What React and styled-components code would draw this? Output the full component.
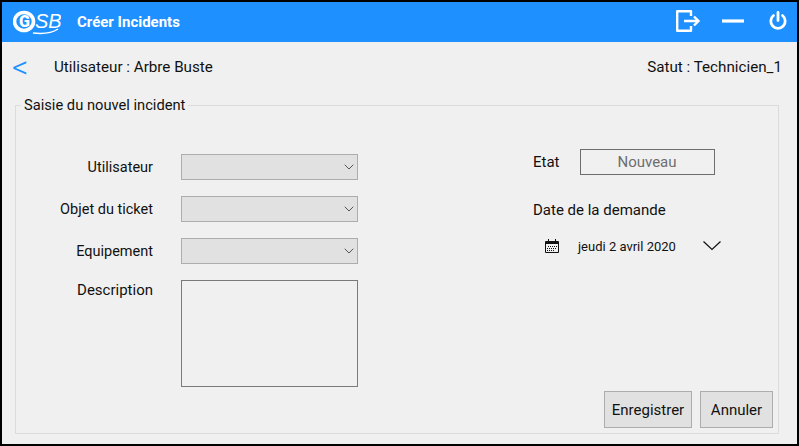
import React from 'react';
import styled, { createGlobalStyle } from 'styled-components';
import { ChevronDown } from 'lucide-react';

const GlobalStyle = createGlobalStyle`
	html, body {
		margin: 0;
		padding: 0;
		background: #000;
	}
	body {
		font-family: Roboto, "Liberation Sans", sans-serif;
	}
`;

const Window = styled.div`
	box-sizing: border-box;
	width: 799px;
	height: 446px;
	border: 2px solid #000;
	background: #f0f0f0;
	display: flex;
	flex-direction: column;
	color: #111;
	font-size: 15px;
`;

const TitleBar = styled.header`
	height: 40px;
	flex: none;
	background: #1e90ff;
	display: flex;
	align-items: center;
	padding: 0 10px 0 11px;
	color: #fff;
`;

const Title = styled.h1`
	margin: 0 0 0 16px;
	font-size: 15px;
	font-weight: 700;
	flex: 1;
`;

const TitleIcons = styled.div`
	display: flex;
	align-items: center;
	gap: 21px;
	padding-bottom: 3px;
`;

const InfoRow = styled.div`
	box-sizing: border-box;
	height: 55px;
	flex: none;
	display: flex;
	align-items: center;
	padding: 0 15px 5px 10px;
`;

const BackLink = styled.span`
	width: 42px;
	color: #1e90ff;
	font-size: 32px;
	font-weight: 300;
	line-height: 24px;
`;

const InfoText = styled.span`
	flex: ${(props) => (props.$grow ? 1 : 'none')};
	font-size: 15.2px;
`;

const Group = styled.fieldset`
	margin: 0 18px 0 13px;
	padding: 0;
	border: 1px solid #dcdcdc;
`;

const GroupTitle = styled.legend`
	margin-left: 5px;
	padding: 0 3px;
	font-size: 14.7px;
	line-height: 16px;
`;

const Columns = styled.div`
	display: flex;
	padding-top: 36px;
`;

const FieldGrid = styled.div`
	display: grid;
	grid-template-columns: 137px 177px;
	grid-auto-rows: min-content;
	column-gap: 28px;
	row-gap: 16px;
	padding-top: 5px;
`;

const FieldLabel = styled.label`
	height: 26px;
	text-align: right;
	font-size: ${(props) => props.$size || 14.5}px;
	line-height: ${(props) => props.$lineHeight || 28}px;
`;

const Select = styled.div`
	box-sizing: border-box;
	height: 26px;
	background: #e1e1e1;
	border: 1px solid #adadad;
	display: flex;
	align-items: center;
	justify-content: flex-end;
	color: #555;
`;

const Description = styled.div`
	box-sizing: border-box;
	height: 107px;
	background: #f0f0f0;
	border: 1px solid #7a7a7a;
`;

const SideColumn = styled.div`
	margin-left: 175px;
	display: flex;
	flex-direction: column;
`;

const StateRow = styled.div`
	display: flex;
	align-items: center;
	height: 26px;
	gap: 20px;
`;

const StateValue = styled.div`
	box-sizing: border-box;
	width: 135px;
	height: 26px;
	border: 1px solid #6d6d6d;
	color: #6d6d6d;
	text-align: center;
	line-height: 24px;
`;

const DateLabel = styled.div`
	margin-top: 22px;
	line-height: 26px;
`;

const DatePicker = styled.div`
	display: flex;
	align-items: center;
	height: 26px;
	margin-top: 10px;
	padding-left: 12px;
	font-size: 13px;
`;

const DateText = styled.span`
	margin-left: 19px;
	width: 125px;
`;

const Actions = styled.div`
	display: flex;
	justify-content: flex-end;
	gap: 8px;
	padding: 4px 5px 5px 0;
`;

const Button = styled.button`
	box-sizing: border-box;
	width: ${(props) => props.$width}px;
	height: 37px;
	padding: 0;
	background: #e1e1e1;
	border: 1px solid #adadad;
	color: #111;
	font: inherit;
`;

const ExitIcon = () => (
	<svg width="26" height="24" viewBox="0 0 26 24" fill="none" stroke="#fff" strokeWidth="2.4">
		<path d="M16 7V2.200H2.200v19.600H16V17" strokeLinejoin="round" />
		<path d="M9 12h14M19 7.500l4.500 4.500-4.500 4.500" />
	</svg>
);

const MinimizeIcon = () => (
	<svg width="26" height="24" viewBox="0 0 26 24" fill="none" stroke="#fff" strokeWidth="3.200">
		<path d="M0 12h22" />
	</svg>
);

const PowerIcon = () => (
	<svg width="18" height="20" viewBox="0 0 18 20" fill="none" stroke="#fff" strokeWidth="2.800" strokeLinecap="round">
		<path d="M9 1.500v8" />
		<path d="M4.500 4.500a7.200 7.200 0 1 0 9 0" />
	</svg>
);

const Logo = () => (
	<svg width="48" height="26" viewBox="0 0 48 26">
		<ellipse cx="11" cy="12.500" rx="9.500" ry="9" fill="none" stroke="#fff" strokeWidth="3.600" />
		<text x="11.500" y="18" fontSize="16" fontWeight="900" fontFamily="Roboto" fill="#fff" textAnchor="middle">G</text>
		<text x="22" y="19" fontSize="20" fontStyle="italic" fontFamily="Liberation Sans" fill="#fff">SB</text>
		<path d="M20 24c9 1 19 0 25-4" fill="none" stroke="#fff" strokeWidth="1.400" />
	</svg>
);

const CalendarIcon = () => (
	<svg width="14" height="14" viewBox="0 0 14 14" fill="none" stroke="#111">
		<path d="M.5 2.500h13v11H.5z" />
		<path d="M.5 4h13" strokeWidth="2" />
		<path d="M3.500 0v3M10.500 0v3" />
		<path d="M3 7.500h9M2 9.500h10M2 11.500h7" strokeDasharray="1 1" />
	</svg>
);

const DateChevron = () => (
	<svg width="18" height="10" viewBox="0 0 18 10" fill="none" stroke="#111" strokeWidth="1.200">
		<path d="M.5 .5 9 8.500 17.500 .5" />
	</svg>
);

const fields = ['Utilisateur', 'Objet du ticket', 'Equipement'];

const App = () => (
	<Window>
		<GlobalStyle />
		<TitleBar>
			<Logo />
			<Title>Créer Incidents</Title>
			<TitleIcons>
				<ExitIcon />
				<MinimizeIcon />
				<PowerIcon />
			</TitleIcons>
		</TitleBar>
		<InfoRow>
			<BackLink>&lt;</BackLink>
			<InfoText $grow>Utilisateur : Arbre Buste</InfoText>
			<InfoText>Satut : Technicien_1</InfoText>
		</InfoRow>
		<Group>
			<GroupTitle>Saisie du nouvel incident</GroupTitle>
			<Columns>
				<FieldGrid>
					{fields.map((field) => (
						<React.Fragment key={field}>
							<FieldLabel>{field}</FieldLabel>
							<Select>
								<ChevronDown size={16} strokeWidth={1.5} />
							</Select>
						</React.Fragment>
					))}
					<FieldLabel $size={15} $lineHeight={21}>Description</FieldLabel>
					<Description />
				</FieldGrid>
				<SideColumn>
					<StateRow>
						<span>Etat</span>
						<StateValue>Nouveau</StateValue>
					</StateRow>
					<DateLabel>Date de la demande</DateLabel>
					<DatePicker>
						<CalendarIcon />
						<DateText>jeudi 2 avril 2020</DateText>
						<DateChevron />
					</DatePicker>
				</SideColumn>
			</Columns>
			<Actions>
				<Button $width={88}>Enregistrer</Button>
				<Button $width={73}>Annuler</Button>
			</Actions>
		</Group>
	</Window>
);

export default App;
